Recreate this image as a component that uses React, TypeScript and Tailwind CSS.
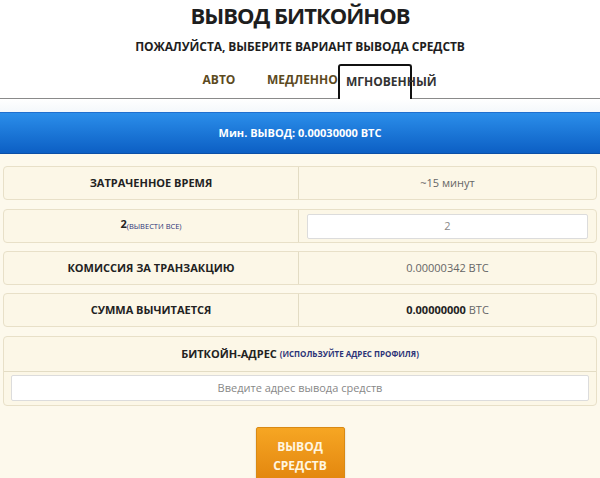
export default function App() {
  return (
    <div className="w-[600px] h-[478px] overflow-hidden bg-[#fdf9ec] font-['Open_Sans',sans-serif] text-[#222]">
      {/* header */}
      <div className="bg-white pt-[1px]">
        <h1 className="text-center text-[22px] leading-[28px] font-bold tracking-[-1px] text-[#1e1e1e]">ВЫВОД БИТКОЙНОВ</h1>
        <p className="mt-[10px] text-center text-[12px] leading-[16px] font-bold tracking-[-0.1px] text-[#1e1e1e]">ПОЖАЛУЙСТА, ВЫБЕРИТЕ ВАРИАНТ ВЫВОДА СРЕДСТВ</p>
        <div className="mt-[9px] flex items-end border-b border-[#8a8a8a] pl-[187px] h-[35px]">
          <div className="w-[64px] pb-[9px] text-center text-[12px] font-bold text-[#5c4a1e]">АВТО</div>
          <div className="w-[87px] pb-[9px] pl-[16px] text-[12px] font-bold text-[#5c4a1e] whitespace-nowrap">МЕДЛЕННО</div>
          <div className="relative -mb-px h-[35px] w-[74px] rounded-t-[3px] border-2 border-b-0 border-[#111] bg-white">
            <span className="absolute left-[6px] top-[7px] whitespace-nowrap text-[12px] font-bold text-[#333]">МГНОВЕННЫЙ</span>
          </div>
        </div>
        <div className="h-[13px] bg-gradient-to-b from-[#ffffff] to-[#f4f8fb]" />
      </div>

      {/* blue bar */}
      <div className="flex h-[42px] items-center justify-center border-t border-b border-t-[#1f6fcf] border-b-[#0b4fa6] bg-gradient-to-b from-[#2b8eea] to-[#0c5fc4] text-[11px] font-bold text-white">
        Мин. ВЫВОД: 0.00030000 BTC
      </div>

      {/* rows */}
      <div className="flex flex-col gap-[8px] px-[3px] pt-[12px]">
        <div className="flex h-[34px] rounded-[4px] border border-[#e8e0c8] bg-[#fcf7e7]">
          <div className="flex w-[295px] items-center justify-center border-r border-[#e3dcc4] text-[11px] font-bold">ЗАТРАЧЕННОЕ ВРЕМЯ</div>
          <div className="flex flex-1 items-center justify-center text-[11px] text-[#666]">~15 минут</div>
        </div>
        <div className="mt-[1px] flex h-[34px] rounded-[4px] border border-[#e8e0c8] bg-[#fcf7e7]">
          <div className="flex w-[295px] items-end justify-center border-r border-[#e3dcc4] pb-[10px] text-[11px] font-bold">
            2<span className="text-[7.5px] font-normal text-[#2d3478]">(ВЫВЕСТИ ВСЕ)</span>
          </div>
          <div className="flex flex-1 items-center px-[8px]">
            <div className="flex h-[25px] w-full items-center justify-center rounded-[2px] border border-[#dcdcdc] bg-white text-[11px] text-[#888]">2</div>
          </div>
        </div>
        <div className="flex h-[34px] rounded-[4px] border border-[#e8e0c8] bg-[#fcf7e7]">
          <div className="flex w-[295px] items-center justify-center border-r border-[#e3dcc4] text-[11px] font-bold">КОМИССИЯ ЗА ТРАНЗАКЦИЮ</div>
          <div className="flex flex-1 items-center justify-center text-[11px] text-[#666]">0.00000342 BTC</div>
        </div>
        <div className="flex h-[34px] rounded-[4px] border border-[#e8e0c8] bg-[#fcf7e7]">
          <div className="flex w-[295px] items-center justify-center border-r border-[#e3dcc4] text-[11px] font-bold">СУММА ВЫЧИТАЕТСЯ</div>
          <div className="flex flex-1 items-center justify-center text-[11px] text-[#666]">
            <span className="font-bold text-[#222]">0.00000000</span>&nbsp;BTC
          </div>
        </div>
        <div className="mt-[1px] rounded-[4px] border border-[#e8e0c8] bg-[#fcf7e7]">
          <div className="flex h-[35px] items-center justify-center border-b border-[#e3dcc4] text-[11px] font-bold">
            БИТКОЙН-АДРЕС&nbsp;<span className="text-[8px] text-[#2d3478]">(ИСПОЛЬЗУЙТЕ АДРЕС ПРОФИЛЯ)</span>
          </div>
          <div className="px-[7px] pb-[4px] pt-[3px]">
            <div className="flex h-[26px] items-center justify-center rounded-[2px] border border-[#dcdcdc] bg-white text-[11px] text-[#888]">Введите адрес вывода средств</div>
          </div>
        </div>
      </div>

      {/* button */}
      <div className="mt-[21px] flex justify-center">
        <button className="h-[56px] w-[89px] rounded-[2px] border border-[#d98a14] bg-gradient-to-b from-[#f6a623] to-[#e2850c] pt-[2px] text-[12px] font-bold leading-[19px] text-[#fff6e0] shadow-[0_1px_2px_rgba(0,0,0,0.2)]">
          ВЫВОД<br />СРЕДСТВ
        </button>
      </div>
    </div>
  );
}
